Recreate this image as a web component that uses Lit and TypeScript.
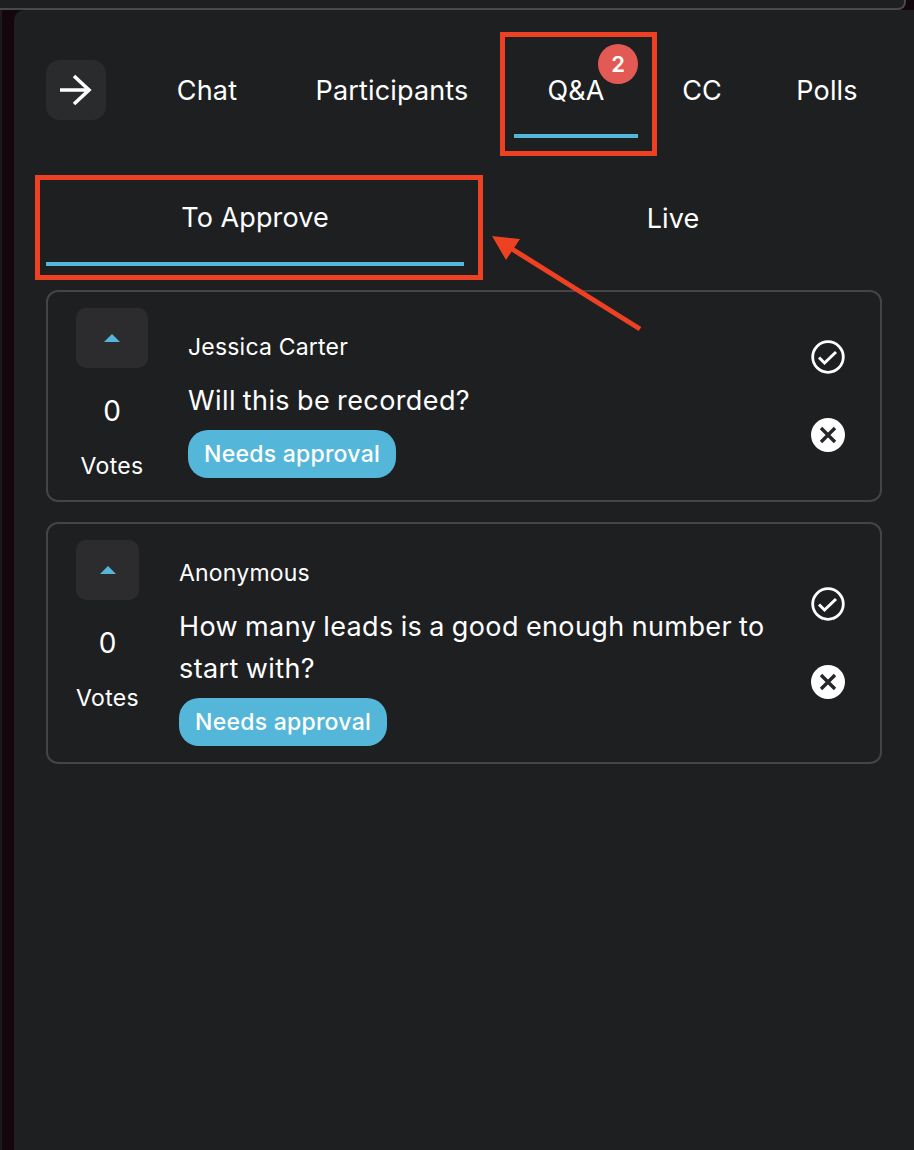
import { LitElement, html, css } from 'lit';
import { customElement, property } from 'lit/decorators.js';
import { classMap } from 'lit/directives/class-map.js';

@customElement('question-card')
export class QuestionCard extends LitElement {
  static override styles = css`
    * {
      box-sizing: border-box;
    }
    :host {
      display: block;
    }
    .card {
      display: flex;
      align-items: center;
      border: 2px solid #444547;
      border-radius: 12px;
      padding: 16px 35px 16px 28px;
    }
    .votes {
      align-self: flex-start;
      display: flex;
      flex-direction: column;
      align-items: center;
      width: 63px;
      height: 176px;
      margin-right: 40px;
      flex: none;
    }
    .votes.wide {
      width: 72px;
      align-self: center;
    }
    .vote-btn {
      width: 100%;
      height: 60px;
      background: #2c2c2e;
      border-radius: 10px;
      display: flex;
      align-items: center;
      justify-content: center;
    }
    .triangle {
      width: 0;
      height: 0;
      border-left: 8px solid transparent;
      border-right: 8px solid transparent;
      border-bottom: 8px solid #54b7d9;
    }
    .count {
      margin-top: 28px;
      font-size: 28px;
      line-height: 30px;
    }
    .votes-label {
      margin-top: 25px;
      font-size: 23px;
      line-height: 30px;
      letter-spacing: 0.3px;
    }
    .content {
      flex: 1;
      min-width: 0;
      padding-top: 18px;
    }
    .name {
      font-size: 23px;
      line-height: 30px;
      letter-spacing: 0.2px;
    }
    .question {
      margin-top: 18px;
      font-size: 27px;
      line-height: 42px;
      letter-spacing: 0.4px;
      word-spacing: -1px;
    }
    .pill {
      display: inline-block;
      margin-top: 8px;
      height: 48px;
      padding: 0 16px;
      border-radius: 20px;
      background: #54b7d9;
      font-size: 23px;
      font-weight: 500;
      line-height: 48px;
      letter-spacing: 0.25px;
      vertical-align: top;
    }
    .actions {
      display: flex;
      flex-direction: column;
      gap: 44px;
      margin-left: 24px;
      flex: none;
    }
    svg {
      display: block;
    }
  `;

  @property({ type: String }) name = '';
  @property({ type: String }) question = '';
  @property({ type: Boolean }) wide = false;

  render() {
    return html`
      <div class="card">
        <div class=${classMap({ votes: true, wide: this.wide })}>
          <div class="vote-btn"><div class="triangle"></div></div>
          <div class="count">0</div>
          <div class="votes-label">Votes</div>
        </div>
        <div class="content">
          <div class="name">${this.name}</div>
          <div class="question">${this.question}</div>
          <span class="pill">Needs approval</span>
        </div>
        <div class="actions">
          <svg width="34" height="34" viewBox="0 0 34 34" fill="none">
            <circle cx="17" cy="17" r="15.3" stroke="#fff" stroke-width="2.8"></circle>
            <path d="M8 17.5l5.5 5.5L25 12" stroke="#fff" stroke-width="3"></path>
          </svg>
          <svg width="34" height="34" viewBox="0 0 34 34" fill="none">
            <circle cx="17" cy="17" r="17" fill="#fff"></circle>
            <path d="M10 10l14 14M24 10L10 24" stroke="#26272a" stroke-width="3.4"></path>
          </svg>
        </div>
      </div>
    `;
  }
}

@customElement('app-root')
export class AppRoot extends LitElement {
  static override styles = css`
    * {
      box-sizing: border-box;
    }
    :host {
      display: block;
      position: relative;
      width: 914px;
      height: 1150px;
      overflow: hidden;
      background: #14060d;
      color: #fff;
      font-family: Inter, 'Liberation Sans', sans-serif;
    }
    .topbar {
      width: 906px;
      height: 10px;
      background: #1e1f21;
      border-bottom: 2px solid #48494b;
      border-right: 2px solid #48494b;
      border-bottom-right-radius: 8px;
    }
    .main {
      display: flex;
      height: 1140px;
    }
    .rail {
      width: 14px;
      flex: none;
      border-left: 2px solid #1c1a1e;
    }
    .panel {
      flex: 1;
      background: #1e1f21;
      border-top-left-radius: 10px;
      padding: 50px 32px 0;
    }
    .header {
      display: flex;
      align-items: flex-start;
    }
    .back {
      width: 60px;
      height: 60px;
      margin-right: 38px;
      flex: none;
      background: #2a2b2d;
      border-radius: 14px;
    }
    .back svg {
      display: block;
    }
    .tabs {
      display: grid;
      grid-template-columns: 126px 219px 124px 103px 122px;
      column-gap: 12.5px;
    }
    .tab {
      position: relative;
      height: 78px;
      font-size: 27px;
      line-height: 62px;
      letter-spacing: 0.15px;
      text-align: center;
      border-bottom: 4px solid transparent;
      white-space: nowrap;
    }
    .tab.active {
      border-bottom-color: #54b7d9;
    }
    .badge {
      position: absolute;
      top: -16px;
      right: 0;
      width: 40px;
      height: 40px;
      border-radius: 50%;
      background: #e35a55;
      font-size: 22px;
      font-weight: 600;
      line-height: 40px;
      text-align: center;
      letter-spacing: 0;
    }
    .subtabs {
      display: grid;
      grid-template-columns: 1fr 1fr;
      margin-top: 38px;
      margin-bottom: 24px;
      width: 836px;
    }
    .subtab {
      height: 90px;
      padding-top: 28px;
      font-size: 27px;
      line-height: 30px;
      letter-spacing: 0.1px;
      text-align: center;
      border-bottom: 4px solid transparent;
    }
    .subtab.active {
      padding-top: 27px;
      border-bottom-color: #54b7d9;
    }
    .cards {
      display: flex;
      flex-direction: column;
      gap: 20px;
      width: 836px;
    }
    .marks {
      position: absolute;
      inset: 0;
      pointer-events: none;
    }
  `;

  render() {
    return html`
      <div class="topbar"></div>
      <div class="main">
        <div class="rail"></div>
        <div class="panel">
          <div class="header">
            <div class="back">
              <svg width="60" height="60" viewBox="0 0 60 60" fill="none">
                <path d="M14 30h30M28 16l15 14-15 14" stroke="#fff" stroke-width="3.6"></path>
              </svg>
            </div>
            <div class="tabs">
              <div class="tab">Chat</div>
              <div class="tab">Participants</div>
              <div class="tab active">Q&amp;A<span class="badge">2</span></div>
              <div class="tab">CC</div>
              <div class="tab">Polls</div>
            </div>
          </div>
          <div class="subtabs">
            <div class="subtab active">To Approve</div>
            <div class="subtab">Live</div>
          </div>
          <div class="cards">
            <question-card wide name="Jessica Carter" question="Will this be recorded?"></question-card>
            <question-card name="Anonymous" question="How many leads is a good enough number to start with?"></question-card>
          </div>
        </div>
      </div>
      <svg class="marks" width="914" height="1150" viewBox="0 0 914 1150" fill="none">
        <rect x="502.5" y="34.5" width="152" height="119" stroke="#ee4023" stroke-width="5"></rect>
        <rect x="37.5" y="177.5" width="443" height="100" stroke="#ee4023" stroke-width="5"></rect>
        <path d="M640 329L512 249" stroke="#ee4023" stroke-width="5"></path>
        <path d="M492 236L520 239L506 260Z" fill="#ee4023"></path>
      </svg>
    `;
  }
}
